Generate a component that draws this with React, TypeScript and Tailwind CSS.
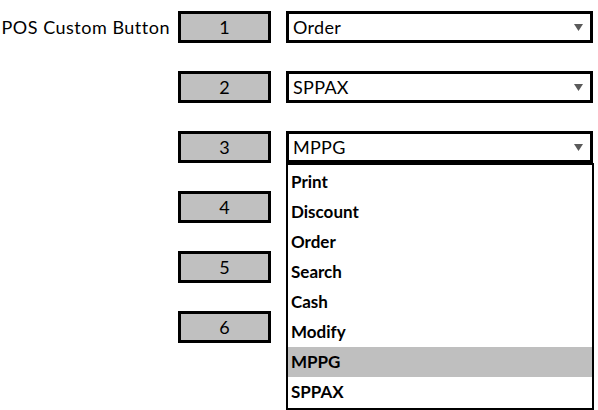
const ROWS = [
  { n: 1, value: "Order" },
  { n: 2, value: "SPPAX" },
  { n: 3, value: "MPPG", open: true },
  { n: 4, value: "" },
  { n: 5, value: "" },
  { n: 6, value: "" },
];

const OPTIONS = ["Print", "Discount", "Order", "Search", "Cash", "Modify", "MPPG", "SPPAX"];

function Arrow() {
  return (
    <svg width="9" height="7" viewBox="0 0 9 7" className="shrink-0">
      <path d="M0 0 L9 0 L4.5 7 Z" fill="#5a5a5a" />
    </svg>
  );
}

export default function App() {
  return (
    <div
      className="w-[598px] h-[410px] bg-white overflow-hidden pt-[11px] text-black"
      style={{ fontFamily: "Lato, 'Open Sans', sans-serif" }}
    >
      {ROWS.map((row, i) => (
        <div key={row.n} className={`flex items-center h-[32px] ${i < ROWS.length - 1 ? "mb-[28px]" : ""}`}>
          <div className="w-[178px] pr-[8px] text-right text-[18px] tracking-[0.5px] whitespace-nowrap">
            {i === 0 ? "POS Custom Button" : ""}
          </div>
          <div className="w-[93px] h-[32px] bg-[#c0c0c0] border-[3px] border-black flex items-center justify-center text-[18px]">
            {row.n}
          </div>
          {i < 3 && (
            <div className="relative ml-[15px] w-[307px] h-[32px]">
              <div className="w-full h-full border-[3px] border-black bg-white flex items-center justify-between pl-[4px] pr-[7px] text-[18px] tracking-[0.3px]">
                <span>{row.value}</span>
                <Arrow />
              </div>
              {row.open && (
                <div className="absolute left-0 top-full w-[308px] bg-white border-2 border-black pt-[2px] pb-[1px] z-10">
                  {OPTIONS.map((opt) => (
                    <div
                      key={opt}
                      className={`h-[30px] flex items-center pl-[3px] text-[17px] font-bold ${
                        opt === row.value ? "bg-[#bfbfbf]" : ""
                      }`}
                    >
                      {opt}
                    </div>
                  ))}
                </div>
              )}
            </div>
          )}
        </div>
      ))}
    </div>
  );
}
